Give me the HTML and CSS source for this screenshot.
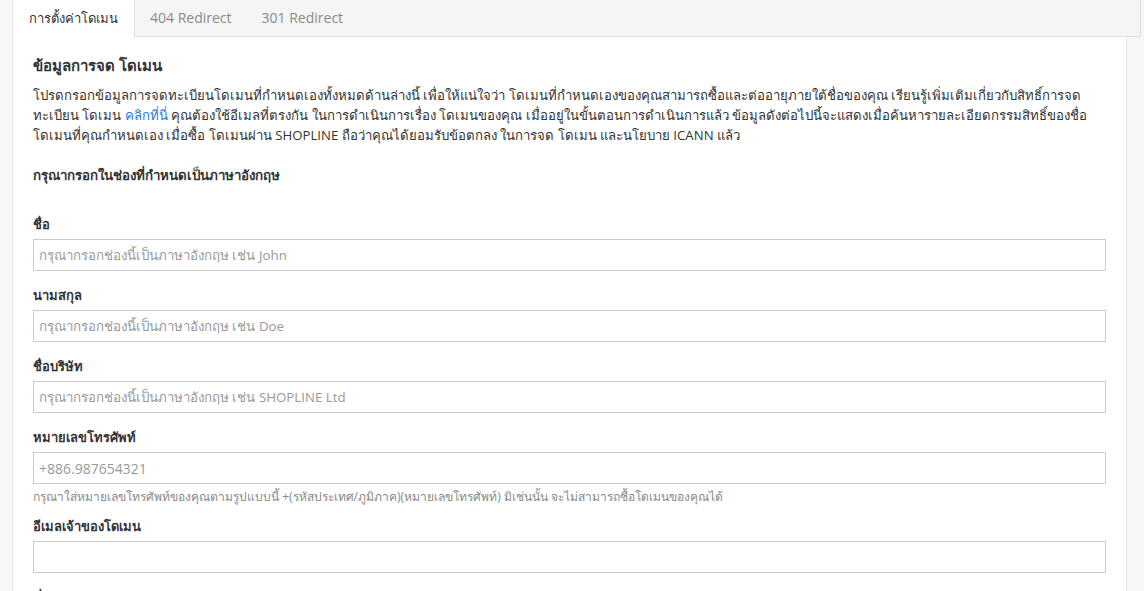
FILE: index.html
```html
<!DOCTYPE html>
<html lang="th">
<head>
    <meta charset="UTF-8">
    <meta name="viewport" content="width=device-width, initial-scale=1.0">
    <title>Domain Settings</title>
    <link rel="stylesheet" href="styles.css">
</head>
<body>
    <div class="page">
        <div class="tabs">
            <div class="tab active">การตั้งค่าโดเมน</div>
            <div class="tab">404 Redirect</div>
            <div class="tab">301 Redirect</div>
        </div>

        <div class="panel">
            <h2 class="title">ข้อมูลการจด โดเมน</h2>
            <p class="intro">โปรดกรอกข้อมูลการจดทะเบียนโดเมนที่กำหนดเองทั้งหมดด้านล่างนี้ เพื่อให้แน่ใจว่า โดเมนที่กำหนดเองของคุณสามารถซื้อและต่ออายุภายใต้ชื่อของคุณ เรียนรู้เพิ่มเติมเกี่ยวกับสิทธิ์การจด<br>ทะเบียน โดเมน <a href="#">คลิกที่นี่</a> คุณต้องใช้อีเมลที่ตรงกัน ในการดำเนินการเรื่อง โดเมนของคุณ เมื่ออยู่ในขั้นตอนการดำเนินการแล้ว ข้อมูลดังต่อไปนี้จะแสดงเมื่อค้นหารายละเอียดกรรมสิทธิ์ของชื่อ<br>โดเมนที่คุณกำหนดเอง เมื่อซื้อ โดเมนผ่าน SHOPLINE ถือว่าคุณได้ยอมรับข้อตกลง ในการจด โดเมน และนโยบาย ICANN แล้ว</p>

            <p class="note">กรุณากรอกในช่องที่กำหนดเป็นภาษาอังกฤษ</p>

            <div class="field">
                <label>ชื่อ</label>
                <input type="text" placeholder="กรุณากรอกช่องนี้เป็นภาษาอังกฤษ เช่น John">
            </div>
            <div class="field">
                <label>นามสกุล</label>
                <input type="text" placeholder="กรุณากรอกช่องนี้เป็นภาษาอังกฤษ เช่น Doe">
            </div>
            <div class="field">
                <label>ชื่อบริษัท</label>
                <input type="text" placeholder="กรุณากรอกช่องนี้เป็นภาษาอังกฤษ เช่น SHOPLINE Ltd">
            </div>
            <div class="field">
                <label>หมายเลขโทรศัพท์</label>
                <input type="text" class="latin" placeholder="+886.987654321">
                <div class="help">กรุณาใส่หมายเลขโทรศัพท์ของคุณตามรูปแบบนี้ +(รหัสประเทศ/ภูมิภาค)(หมายเลขโทรศัพท์) มิเช่นนั้น จะไม่สามารถซื้อโดเมนของคุณได้</div>
            </div>
            <div class="field">
                <label>อีเมลเจ้าของโดเมน</label>
                <input type="email">
            </div>
            <div class="field">
                <label>ที่อยู่</label>
                <input type="text">
            </div>
        </div>
    </div>
</body>
</html>
```

FILE: styles.css
```css
body {
    margin: 0;
    padding: 0;
    background: #f7f7f7;
    font-family: "Open Sans", "Noto Sans", sans-serif;
    font-size: 13.3px;
    color: #333;
    overflow: hidden;
}

.page {
    padding-left: 12px;
}

.tabs {
    display: flex;
    height: 36px;
    margin-right: 3px;
    background: #f5f5f5;
    border-left: 1px solid #e6e6e6;
    border-right: 1px solid #e0e0e0;
    border-bottom: 1px solid #e0e0e0;
}

.tab {
    padding: 0 15px;
    line-height: 36px;
    font-size: 14px;
    color: #8a8a8a;
}

.tab.active {
    padding: 0 16px 0 16px;
    background: #fff;
    color: #333;
    font-size: 13px;
    border-right: 1px solid #e0e0e0;
    margin-bottom: -1px;
    line-height: 37px;
}

.panel {
    margin-right: 17px;
    background: #fff;
    border-left: 1px solid #e6e6e6;
    border-right: 1px solid #e6e6e6;
    padding: 16px 20px 20px 20px;
}

.title {
    margin: 0 0 8px 0;
    font-size: 15px;
    font-weight: 600;
    line-height: 24px;
}

.intro {
    margin: 0;
    font-size: 13.2px;
    line-height: 20px;
    white-space: nowrap;
}

.intro a {
    color: #2a7ae2;
    text-decoration: none;
}

.note {
    margin: 20px 0 29px 0;
    font-weight: 600;
    line-height: 20px;
}

.field {
    margin-bottom: 14px;
}

.field label {
    display: block;
    font-size: 13px;
    font-weight: 600;
    line-height: 20px;
    margin-bottom: 5px;
}

.field input {
    display: block;
    box-sizing: border-box;
    width: 100%;
    height: 32px;
    padding: 0 5px;
    border: 1px solid #ccc;
    border-radius: 0;
    font-family: inherit;
    font-size: 13.3px;
    color: #333;
}

.field input.latin {
    font-size: 14px;
}

.field input::placeholder {
    color: #999;
}

.help {
    margin-top: 3px;
    margin-bottom: -5px;
    font-size: 12.1px;
    color: #8a8a8a;
    line-height: 20px;
}
```
